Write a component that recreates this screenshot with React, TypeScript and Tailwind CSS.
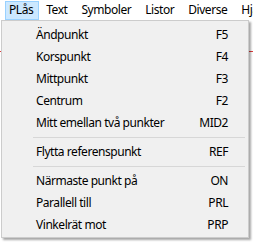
import React from 'react';

const menuBar = ['PLås', 'Text', 'Symboler', 'Listor', 'Diverse', 'Hjälp'];

type Entry = { label: string; key: string } | 'sep';

const entries: Entry[] = [
  { label: 'Ändpunkt', key: 'F5' },
  { label: 'Korspunkt', key: 'F4' },
  { label: 'Mittpunkt', key: 'F3' },
  { label: 'Centrum', key: 'F2' },
  { label: 'Mitt emellan två punkter', key: 'MID2' },
  'sep',
  { label: 'Flytta referenspunkt', key: 'REF' },
  'sep',
  { label: 'Närmaste punkt på', key: 'ON' },
  { label: 'Parallell till', key: 'PRL' },
  { label: 'Vinkelrät mot', key: 'PRP' },
];

export default function App() {
  return (
    <div
      className="relative w-[253px] h-[243px] overflow-hidden bg-white text-[12px] tracking-[-0.45px] text-black"
      style={{ fontFamily: '"Noto Sans", "DejaVu Sans", sans-serif' }}
    >
      {/* menu bar */}
      <div className="flex h-[20px] items-center pl-[5px] whitespace-nowrap">
        {menuBar.map((m, i) => (
          <div
            key={m}
            className={
              i === 0
                ? 'flex h-[19px] items-center border border-[#99d1ff] bg-[#cce8ff] pl-[3px] pr-[5px]'
                : 'flex h-[19px] items-center px-[7px]'
            }
          >
            {m}
          </div>
        ))}
      </div>

      {/* red line of the drawing behind */}
      <div className="absolute left-0 top-[51px] h-px w-full bg-[#e03c3c]" />

      {/* dropdown */}
      <div className="relative z-10 ml-[1px] w-[248px] border border-[#cccccc] bg-[#f0f0f0] pt-[3px] pb-[1px] shadow-[2px_2px_2px_rgba(0,0,0,0.35)]">
        {entries.map((e, i) =>
          e === 'sep' ? (
            <div key={i} className="flex h-[7px] items-center pl-[31px] pr-[3px]">
              <div className="h-px w-full bg-[#d7d7d7]" />
            </div>
          ) : (
            <div key={i} className="flex h-[22px] items-center justify-between pl-[34px] pr-[20px]">
              <span>{e.label}</span>
              <span>{e.key}</span>
            </div>
          )
        )}
      </div>
    </div>
  );
}
